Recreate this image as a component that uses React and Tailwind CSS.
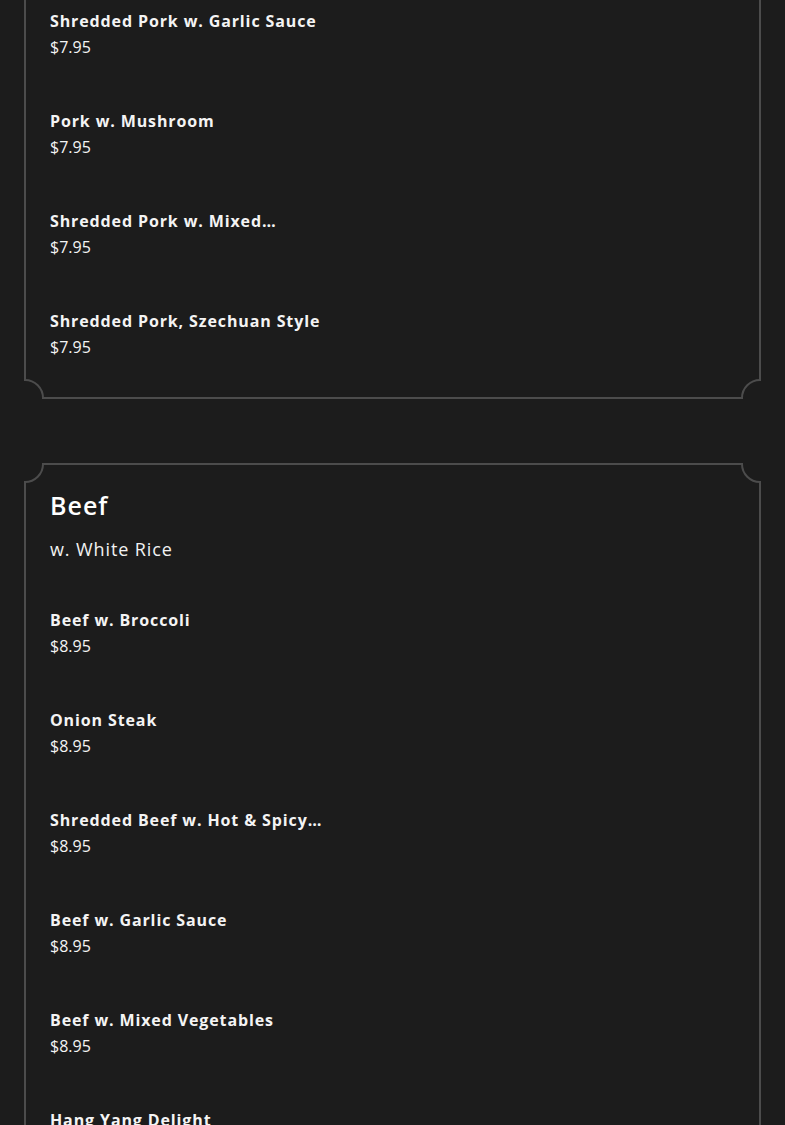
const porkItems = [
  { name: 'Shredded Pork w. Garlic Sauce', price: '$7.95' },
  { name: 'Pork w. Mushroom', price: '$7.95' },
  { name: 'Shredded Pork w. Mixed Vegetables', price: '$7.95' },
  { name: 'Shredded Pork, Szechuan Style', price: '$7.95' },
];

const beefItems = [
  { name: 'Beef w. Broccoli', price: '$8.95' },
  { name: 'Onion Steak', price: '$8.95' },
  { name: 'Shredded Beef w. Hot & Spicy Sauce', price: '$8.95' },
  { name: 'Beef w. Garlic Sauce', price: '$8.95' },
  { name: 'Beef w. Mixed Vegetables', price: '$8.95' },
  { name: 'Hang Yang Delight', price: '$8.95' },
];

// notched corner: quarter arc centred on the card corner
function Corner({ pos }) {
  const place = {
    tl: 'top-[-2px] left-[-2px]',
    tr: 'top-[-2px] right-[-2px] rotate-90',
    br: 'bottom-[-2px] right-[-2px] rotate-180',
    bl: 'bottom-[-2px] left-[-2px] -rotate-90',
  }[pos];
  return (
    <svg className={`absolute ${place}`} width="21" height="21" viewBox="0 0 21 21">
      <circle cx="1" cy="1" r="18" fill="#1c1c1c" stroke="#4c4c4c" strokeWidth="2" />
    </svg>
  );
}

function Item({ name, price }) {
  return (
    <div>
      <p className="w-[290px] line-clamp-1 text-[16px] leading-6 font-bold text-[#f4f4f4] tracking-[0.055em]">
        {name}
      </p>
      <p className="mt-0.5 text-[16px] leading-6 text-[#f4f4f4]">{price}</p>
    </div>
  );
}

export default function App() {
  return (
    <div
      className="min-h-screen bg-[#1c1c1c] pb-10"
      style={{ fontFamily: '"Open Sans", "Liberation Sans", sans-serif' }}
    >
      <section className="relative mx-6 border-2 border-t-0 border-[#4c4c4c] px-6 pt-[9px] pb-[38px]">
        <div className="flex flex-col gap-[50px]">
          {porkItems.map((it) => (
            <Item key={it.name} {...it} />
          ))}
        </div>
        <Corner pos="bl" />
        <Corner pos="br" />
      </section>

      <section className="relative mx-6 mt-[64px] border-2 border-[#4c4c4c] px-6 pt-[24px] pb-[38px]">
        <h2 className="text-[25px] leading-8 font-semibold tracking-[0.04em] text-white">Beef</h2>
        <p className="mt-[14px] text-[18px] leading-7 font-normal tracking-[0.05em] text-[#f2f2f2]">
          w. White Rice
        </p>
        <div className="mt-[45px] flex flex-col gap-[50px]">
          {beefItems.map((it) => (
            <Item key={it.name} {...it} />
          ))}
        </div>
        <Corner pos="tl" />
        <Corner pos="tr" />
        <Corner pos="bl" />
        <Corner pos="br" />
      </section>
    </div>
  );
}
